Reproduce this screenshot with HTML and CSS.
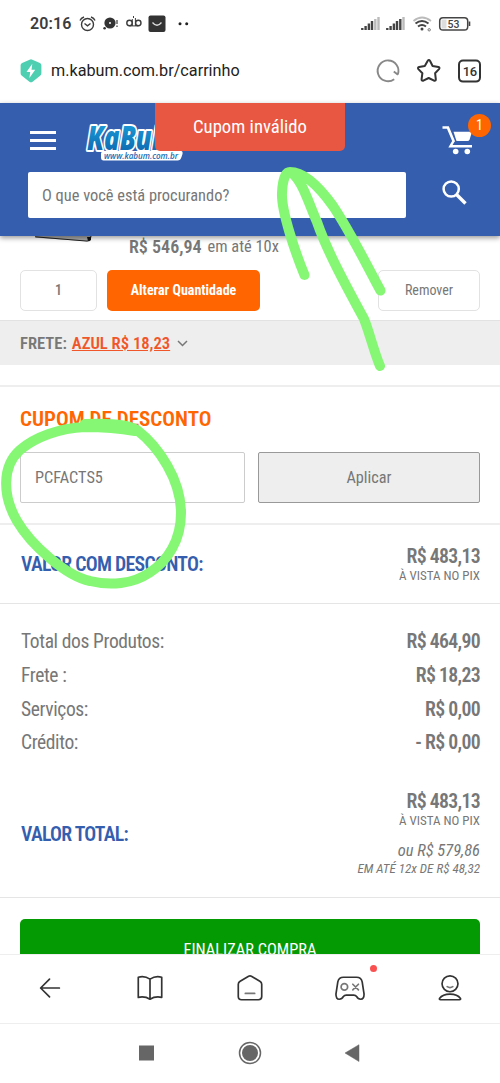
FILE: index.html
```html
<!DOCTYPE html>
<html lang="pt-BR">
<head>
<meta charset="utf-8">
<title>Carrinho</title>
<link rel="stylesheet" href="styles.css">
</head>
<body>
<div class="screen">
  <div class="status">
    <span class="clock">20:16</span>
    <svg class="status-left" width="120" height="24" viewBox="78 10 120 24" fill="none" stroke="#3c3c3c">
      <circle cx="87.500" cy="23.500" r="6" stroke-width="1.400"/><path d="M84.500 22.500l3 2.300 3-2.300M80 19.500q1-2.500 4-3.500M95 19.500q-1-2.500-4-3.500" stroke-width="1.400"/>
      <circle cx="110" cy="22" r="5.600" fill="#333" stroke="none"/><circle cx="110" cy="22" r="1" fill="#fff" stroke="none"/><circle cx="104.600" cy="27.300" r="1.300" fill="#333" stroke="none"/><path d="M117 19v4M117 24.500v1.500" stroke-width="1.200"/>
      <circle cx="129.500" cy="22" r="2.700" stroke-width="1.400"/><circle cx="138.300" cy="22" r="2.700" stroke-width="1.400"/><path d="M132.300 18v7M135.400 17v8M129.500 24.900h8.800M133.500 15v2" stroke-width="1"/>
      <rect x="148.500" y="14.500" width="17" height="16.500" rx="2" fill="#333" stroke="none"/><path d="M152.500 21.500q4.500 5.500 9 0" stroke="#ddd" stroke-width="1.300"/>
      <circle cx="180" cy="22.700" r="1.500" fill="#222" stroke="none"/><circle cx="186.700" cy="22.700" r="1.500" fill="#222" stroke="none"/>
    </svg>
    <svg class="status-right" width="116" height="24" viewBox="358 10 116 24" fill="none">
      <g stroke="#444" stroke-width="2.400"><path d="M362.300 29v-2M365.600 29v-4M368.900 29v-6.500M372 29v-9M387.300 29v-2M390.600 29v-4M393.900 29v-6.500M397 29v-9M400.300 29v-11"/><path stroke="#bbb" d="M375.300 29v-11M378.500 29v-13M403.500 29v-13"/></g>
      <path d="M413.500 20q8.500-7 17.500 0" stroke="#bbb" stroke-width="1.700"/><path d="M415.500 22.500q6.500-5 13 0M418 25.500q4-3 8 0" stroke="#444" stroke-width="2"/><circle cx="422" cy="28" r="1.500" fill="#444"/><circle cx="429.200" cy="28.800" r="1.200" stroke="#777"/>
      <rect x="439.700" y="16.700" width="28" height="12.300" rx="3.300" stroke="#444" stroke-width="1.500"/><rect x="441.500" y="18.500" width="5" height="9" fill="#ddd"/><path d="M469.500 20.500v4.500" stroke="#444" stroke-width="1.600"/>
      <text class="battery" x="453.500" y="26.800" text-anchor="middle">53</text>
    </svg>
  </div>
  <div class="urlbar">
    <svg width="22" height="24" viewBox="0 0 22 24"><path d="M9.600.700q1.400-.700 2.800 0l7.500 3.300q1.500.700 1.500 2.200v8q0 1.700-1.300 2.600l-7.500 6q-1.600 1-3.200 0l-7.500-6Q.600 16 .600 14.200v-8Q.600 4.700 2.100 4z" fill="#4fcfb1"/><path d="M12.300 4.700L6.500 13h3.700l-.8 6 5.800-8.300h-3.700z" fill="#fff"/></svg>
    <span class="address">m.kabum.com.br/carrinho</span>
    <svg class="url-icons" width="110" height="28" viewBox="374 56 110 28" fill="none">
      <path d="M394.200 78.200A10.400 10.400 0 1 1 397.800 73.400M398 73.800l-4.200-3.300" stroke="#888" stroke-width="1.900"/>
      <path d="M427.600 60q1.300-1.800 2.500 0l2.500 5 5.800 1q1.800.500.600 2.100l-3.900 4.100.7 6q.1 1.900-1.700 1.500l-5.400-2.700-5.400 2.700q-1.800.4-1.700-1.500l.8-6-4-4.100q-1.100-1.600.7-2.100l5.700-1z" stroke="#333" stroke-width="2" stroke-linejoin="round"/>
      <rect x="459" y="59.600" width="21" height="21" rx="4" stroke="#333" stroke-width="2"/>
      <text class="tabs" x="469.700" y="74.500" text-anchor="middle">16</text>
    </svg>
  </div>
  <header class="header">
    <div class="brand-row">
      <div class="menu"><i></i><i></i><i></i></div>
      <svg class="logo" width="104" height="44" viewBox="80 120 104 44">
        <defs><linearGradient id="ink" x1="0" y1="0" x2="0" y2="1"><stop offset=".2" stop-color="#1b9ad6"/><stop offset="1" stop-color="#0a5da8"/></linearGradient></defs>
        <text class="logo-name" x="87" y="149.500" textLength="88" lengthAdjust="spacingAndGlyphs">KaBuM</text>
        <path d="M102 151h79q2 0 1.500 3l-1 3q-1 3.500-4 3.500h-74q-2.500 0-2.500-3v-4z" fill="#fff"/>
        <text class="logo-url" x="104" y="158.500" textLength="74" lengthAdjust="spacingAndGlyphs">www.kabum.com.br</text>
      </svg>
      <div class="toast"><span class="t">Cupom inválido</span></div>
      <div class="cart">
        <svg width="32" height="30" viewBox="442 125 32 30"><path d="M442.500 127.500h5.500l6 14.500M448 128l5.500 13-3 5.200h21.500" fill="none" stroke="#fff" stroke-width="2.500"/><path d="M453.500 131.700h18.500l-2.500 8q-.5 1.300-2 1.300h-11z" fill="#fff"/><circle cx="455.700" cy="151.500" r="2.800" fill="#fff"/><circle cx="467.300" cy="151.500" r="2.800" fill="#fff"/></svg>
        <span class="badge t">1</span>
      </div>
    </div>
    <div class="search-row">
      <div class="search"><span class="t">O que você está procurando?</span></div>
      <svg width="26" height="26" viewBox="441 179 26 26" fill="none" stroke="#fff"><circle cx="451.200" cy="189" r="7.600" stroke-width="2.500"/><path d="M456.500 194.500l9 9" stroke-width="3.400"/></svg>
    </div>
  </header>
  <main class="content">
    <section class="product">
      <div class="price"><svg width="57" height="8" viewBox="0 0 57 8"><path d="M0 0l1 1.700 51 3.500 3-.5L56 0z" fill="#aaa"/><path d="M0 .8l52 4.300 3-.6L56 0" fill="none" stroke="#222"/><path d="M52 1h4v3l-3 1z" fill="#111"/></svg><b class="t">R$ 546,94</b><span class="t">em até 10x</span></div>
      <div class="actions"><div class="qty"><span class="t">1</span></div><div class="change"><span class="t">Alterar Quantidade</span></div><div class="remove"><span class="t">Remover</span></div></div>
    </section>
    <section class="freight"><b class="t">FRETE:</b><a class="t">AZUL R$ 18,23</a><svg width="11" height="7" viewBox="0 0 11 7"><path d="M1 1l4.500 4.500L10 1" fill="none" stroke="#777" stroke-width="1.500"/></svg></section>
    <section class="coupon">
      <h2><span class="t">CUPOM DE DESCONTO</span></h2>
      <div class="coupon-form"><div class="code"><span class="t">PCFACTS5</span></div><div class="apply"><span class="t">Aplicar</span></div></div>
    </section>
    <section class="discount"><h3><span class="t">VALOR COM DESCONTO:</span></h3><div class="amount"><b class="t">R$ 483,13</b><small class="t">À VISTA NO PIX</small></div></section>
    <section class="summary">
      <div class="line"><span class="t">Total dos Produtos:</span><b class="t">R$ 464,90</b></div>
      <div class="line"><span class="t">Frete :</span><b class="t">R$ 18,23</b></div>
      <div class="line"><span class="t">Serviços:</span><b class="t">R$ 0,00</b></div>
      <div class="line"><span class="t">Crédito:</span><b class="t">- R$ 0,00</b></div>
      <div class="total"><h3><span class="t">VALOR TOTAL:</span></h3><div class="amount"><b class="t">R$ 483,13</b><small class="t">À VISTA NO PIX</small><em class="t">ou R$ 579,86</em><em class="t fine">EM ATÉ 12x DE R$ 48,32</em></div></div>
    </section>
    <section class="checkout"><div class="buy"><span class="t">FINALIZAR COMPRA</span></div></section>
  </main>
  <nav class="browser-nav">
    <svg viewBox="0 0 32 32"><path d="M26 16H6M15.500 6.500L6 16l9.500 9.500" /></svg>
    <svg viewBox="0 0 32 32"><path d="M16 6.500Q10 2.500 3.500 4.500V26q7-1.500 12.500 2 5.500-3.500 12.500-2V4.500Q22 2.500 16 6.500V27"/></svg>
    <svg viewBox="0 0 32 32"><path d="M14.500 3.500q1.500-.8 3 0l9 5.300q2 1.200 2 3.200V25q0 3.500-3.500 3.500H7q-3.500 0-3.500-3.500V12q0-2 2-3.200z"/><path d="M11 21.800h10" class="thin"/></svg>
    <div class="games"><svg viewBox="0 0 32 32"><path d="M9 4.500h14q5 0 6 5l2 13q0 5.500-3.500 5.500-3 0-4.500-3-1-1.500-3-1.500h-8q-2 0-3 1.500Q7.500 28 4.500 28q-3.500 0-3.500-5.500L3 9.500q1-5 6-5z"/><circle cx="10" cy="14.800" r="3.500" class="thin"/><path d="M19 12l6 6M25 12l-6 6" class="thin"/></svg><i></i></div>
    <svg viewBox="0 0 32 32"><circle cx="16" cy="11.500" r="8.500"/><path d="M5 27q3-4.500 11-4.500T27 27q1 1.500-1 1.500H6Q4 28.500 5 27z"/><path d="M13 14.500q3 2 6 0" class="thin"/></svg>
  </nav>
  <div class="system-nav">
    <svg viewBox="0 0 24 24"><rect x="4" y="4.500" width="15" height="15" fill="#666"/></svg>
    <svg viewBox="0 0 24 24"><circle cx="12" cy="12" r="10.500" fill="none" stroke="#666" stroke-width="1.500"/><circle cx="12" cy="12" r="8" fill="#666"/></svg>
    <svg viewBox="0 0 24 24"><path d="M4 12L18 3.700v16.800z" fill="#666" stroke="#666" stroke-width=".5" stroke-linejoin="round"/></svg>
  </div>
  <svg class="marker" width="500" height="1083" viewBox="0 0 500 1083">
    <path d="M304.500 275C295 252 281 210 282 193c.5-12 3-21 8-21 9 0 23 6 43 34 18 27 32 56 47.500 84.500M294 175c9 9 14 26 23 47 10 29 28 62 47 97 5 12 10 33 16 47"/>
    <path d="M135 431C118 428 105 427 85 427C60 428 35 437 20 450C1 467 3 497 17 521C31 545 66 576 90 581C110 586 133 584 149 573C168 561 181 540 181 513C181 480 159 447 137 430C128 424 108 423 85 424"/>
  </svg>
</div>
</body>
</html>
```
FILE: styles.css
```css
* { box-sizing: border-box; }
body { margin: 0; background: #fff; font-family: Roboto, "Liberation Sans", sans-serif; color: #777; }
.screen { position: relative; display: flex; flex-direction: column; width: 500px; height: 1083px; overflow: hidden; }
svg { display: block; flex: none; }
h2, h3 { margin: 0; }
.t { font-family: "Roboto Condensed", Roboto, sans-serif; font-stretch: 75%; white-space: nowrap; }
.status { display: flex; align-items: center; height: 46px; padding: 0 26px 0 30px; }
.clock { width: 48px; font-size: 16px; font-weight: 600; letter-spacing: .1px; color: #3c3c3c; }
.status-right { margin-left: auto; }
.battery { font-size: 10.500px; font-weight: 500; fill: #444; }
.urlbar { display: flex; align-items: center; height: 57px; padding: 0 16px 8px 20px; }
.address { margin-left: 9px; font-size: 16.200px; color: #222; }
.url-icons { margin-left: auto; }
.tabs { font-size: 13px; font-weight: 500; letter-spacing: -.4px; fill: #333; }
.header { position: relative; z-index: 1; height: 133px; background: #355eae; box-shadow: 0 2px 5px #0006; }
.brand-row { display: flex; height: 69px; padding-left: 30px; }
.menu { display: flex; flex-direction: column; gap: 5px; width: 50px; padding-top: 28px; }
.menu i { width: 26px; height: 3px; background: #fff; }
.logo { margin-top: 17px; }
.logo-name { font: italic 800 33px "Open Sans", sans-serif; fill: url(#ink); stroke: #fff; stroke-width: 4px; paint-order: stroke; stroke-linejoin: round; }
.logo-url { font: italic 600 8.500px "Open Sans", sans-serif; fill: #2468b0; }
.toast { display: flex; align-items: center; justify-content: center; width: 190px; height: 48px; margin-left: -29px; border-radius: 0 0 5px 5px; background: #e85742; color: #fff; font-size: 18.700px; z-index: 1; }
.cart { position: relative; margin: 22px 0 0 97px; }
.badge { position: absolute; left: 26px; top: -11px; width: 23px; height: 23px; border-radius: 50%; background: #ff6500; color: #fff; font-size: 14px; line-height: 23px; text-align: center; }
.search-row { display: flex; gap: 35px; padding-left: 28px; }
.search-row svg { margin-top: 7px; }
.search { display: flex; align-items: center; width: 378px; height: 46px; padding-left: 14px; border-radius: 2px; background: #fff; font-size: 16.400px; }
.content { height: 718px; overflow: hidden; }
.product { height: 85px; border-bottom: 1px solid #e2e2e2; }
.price { display: flex; height: 34px; padding-left: 35px; font-size: 16.400px; line-height: 21px; }
.price b { margin-left: 37px; font-size: 18px; font-weight: 600; }
.price span { margin-left: 6px; }
.actions { display: flex; height: 41px; padding: 0 20px; font-size: 14px; }
.actions div { display: flex; align-items: center; justify-content: center; padding-bottom: 2px; border-radius: 5px; }
.qty { width: 77px; border: 1px solid #e2e2e2; font-weight: 500; }
.change { width: 153px; margin-left: 10px; background: #ff6500; color: #fff; font-weight: 700; }
.remove { width: 102px; margin-left: auto; border: 1px solid #e2e2e2; }
.freight { display: flex; align-items: center; height: 44px; padding-left: 20px; background: #eee; font-size: 16.600px; }
.freight b { font-weight: 600; }
.freight a { margin-left: 5px; color: #f0562a; font-weight: 600; text-decoration: underline; }
.freight svg { margin-left: 7px; }
.coupon { height: 138px; margin-top: 20px; padding: 20px 20px; border-top: 2px solid #eee; }
.coupon h2 { height: 45px; font-size: 21.100px; font-weight: 600; line-height: 24px; color: #ff6500; }
.coupon-form { display: flex; justify-content: space-between; height: 51px; font-size: 16.300px; }
.code, .apply { display: flex; align-items: center; border: 1px solid #ccc; border-radius: 2px; }
.code { width: 225px; padding-left: 14px; }
.apply { width: 222px; justify-content: center; border-color: #999; background: #eee; }
.discount { display: flex; align-items: center; justify-content: space-between; height: 80px; padding: 0 20px; border-top: 2px solid #eee; }
h3 { padding-left: 1px; font-size: 19.800px; font-weight: 600; letter-spacing: -.72px; color: #355eae; }
.amount { display: flex; flex-direction: column; align-items: flex-end; }
.amount b, .line b { font-size: 19.800px; font-weight: 600; line-height: 23px; letter-spacing: -.7px; }
.amount small { font-size: 13px; line-height: 15px; }
.discount .amount { margin-top: -1px; }
.amount em { margin-top: 14px; font-size: 16.500px; line-height: 18px; }
.amount .fine { margin-top: 0; font-size: 13.100px; line-height: 17px; }
.summary { height: 295px; padding: 21px 20px 0; border-top: 1px solid #e5e5e5; border-bottom: 1px solid #e5e5e5; font-size: 19.500px; }
.line { display: flex; align-items: center; justify-content: space-between; height: 33.700px; }
.line span { padding-left: 1px; letter-spacing: -.38px; }
.total { display: flex; justify-content: space-between; align-items: center; height: 87px; margin-top: 30px; }
.total h3 { margin-top: 2px; }
.checkout { padding: 21px 20px; }
.buy { display: flex; align-items: center; justify-content: center; height: 60px; border-radius: 5px; background: #049a04; color: #fff; font-size: 16.400px; }
.browser-nav { display: flex; justify-content: space-around; align-items: center; height: 70px; padding-bottom: 2px; border-top: 1px solid #eee; border-bottom: 1px solid #eee; background: #fff; }
.browser-nav > * { position: relative; width: 32px; height: 32px; }
.browser-nav svg { width: 32px; height: 32px; padding: 1px; fill: none; stroke: #333; stroke-width: 1.800; stroke-linejoin: round; stroke-linecap: round; }
.browser-nav .thin { stroke: #777; }
.games i { position: absolute; right: -11px; top: -7px; width: 7px; height: 7px; border-radius: 50%; background: #fa5050; }
.system-nav { display: flex; justify-content: center; gap: 79px; height: 59px; padding-bottom: 2px; align-items: center; }
.system-nav svg { width: 24px; height: 24px; }
.marker { position: absolute; left: 0; top: 0; z-index: 3; fill: none; stroke: #85f775; stroke-width: 10; stroke-linecap: round; stroke-linejoin: round; }
```
